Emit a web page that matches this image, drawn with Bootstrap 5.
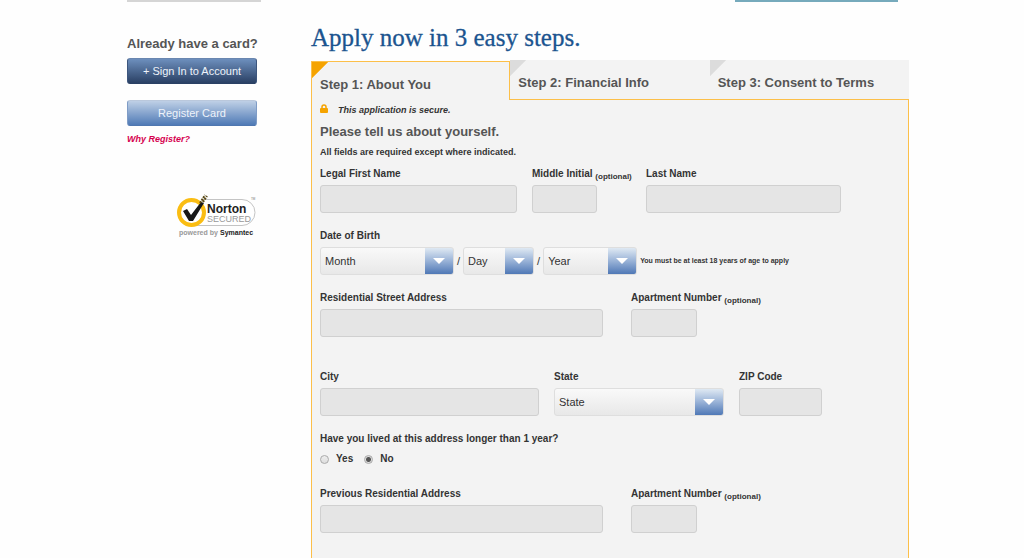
<!DOCTYPE html>
<html lang="en">
<head>
<meta charset="utf-8">
<meta name="viewport" content="width=device-width, initial-scale=1">
<title>Apply now</title>
<link href="https://cdn.jsdelivr.net/npm/bootstrap@5.3.0/dist/css/bootstrap.min.css" rel="stylesheet">
<style>
  body { background: #fefefe; color: #333; font-family: "Liberation Sans", Arial, sans-serif; font-size: 10px; line-height: 12px; }
  .page { max-width: 794px; padding: 0 0 0 12px; gap: 50px; }
  .side { width: 134px; padding-right: 4px; }
  .side-rule { height: 2px; background: #d5d5d5; margin-right: -4px; }
  .side h2 { font-size: 13px; line-height: 16px; color: #555; margin: 34px -4px 6px 0; white-space: nowrap; }
  .side .btn { font-size: 11px; line-height: 16px; padding: 4px; border: 1px solid; border-radius: 3px; color: #eef3fa; height: 26px; }
  .side .btn-signin { background: linear-gradient(#6d8fbd, #2a4064); border-color: #6a87b0 #3d567d #2a4064; }
  .side .btn-register { background: linear-gradient(#bfd0e6, #4f7ab6); border-color: #bac8dc #7f9cc6 #4f77b0; margin-top: 16px; }
  .why { color: #d6004f; font-size: 9px; margin-top: 7px; }
  .norton { margin: 48px 0 0 48px; }
  .top-rule { width: 163px; height: 2px; background: #76aabc; margin-right: 11px; }
  h1 { font-family: Georgia, "Liberation Serif", serif; font-size: 25px; line-height: 32px; color: #1b548f; margin: 20px 0 6px; -webkit-text-stroke: 0.3px; }
  .steps .nav-link { height: 40px; padding: 15px 8px 0; font-size: 13px; line-height: 16px; font-weight: 700; color: #555; background: linear-gradient(135deg, #dcdcdc 11px, transparent 12px) #f3f3f3; border: 0 solid #fcbf49; border-bottom-width: 1px; border-radius: 0; text-align: left; }
  .steps .nav-link.active { color: #555; background: linear-gradient(135deg, #f5a300 11px, transparent 12px) #f3f3f3; border-width: 1px 1px 0; margin-top: 1px; height: 39px; padding-right: 6px; }
  .panel { background: #f3f3f3; border: solid #fcbf49; border-width: 0 1px; padding: 4px 8px 26px; }
  .panel h2 { font-size: 13px; line-height: 16px; font-weight: 700; color: #555; margin: 8px 0 6px; }
  .secure { gap: 10px; font-size: 9px; }
  .required { font-size: 9px; }
  .fields { margin-top: 17px; gap: 15px; }
  .fields-first { margin-top: 10px; }
  .fields-wide { gap: 28px; }
  .fields-city { margin-top: 34px; }
  .fields-prev { margin-top: 23px; }
  .panel label, .panel legend { display: block; font-size: 10px; line-height: 12px; height: 12px; font-weight: 700; margin: 0 0 5px; white-space: nowrap; }
  .optional { font-size: 8px; line-height: 8px; position: relative; top: 2px; }
  .panel .form-control, .panel .form-select { height: 28px; padding: 0 4px; font-size: 11px; line-height: 16px; color: #333; border: 1px solid #d0d0d0; border-radius: 3px; max-width: 100%; }
  .panel .form-control { background: #e5e5e5; }
  .panel .form-select {
    border-color: #dedede;
    background: url("data:image/svg+xml,%3Csvg xmlns='http://www.w3.org/2000/svg' width='12' height='6'%3E%3Cpath d='M0 0h12L6 6z' fill='white'/%3E%3C/svg%3E") right 8px top 10px / 12px 6px no-repeat,
      linear-gradient(#dfe9f3, #a0b8da 45%, #4f78b6) right / 28px 100% no-repeat,
      linear-gradient(#f9f9f9, #e8e8e8);
  }
  .w-first { width: 197px; } .w-mid { width: 65px; } .w-last { width: 195px; }
  .field-mid { width: 99px; }
  .w-month { width: 134px; } .w-day { width: 71px; } .w-year { width: 94px; }
  .w-street { width: 283px; } .w-apt { width: 66px; }
  .w-city { width: 219px; } .w-state { width: 170px; } .w-zip { width: 83px; }
  .dob { gap: 3px; font-size: 11px; }
  .age { font-size: 7px; font-weight: 700; }
  .panel .choices { margin-top: 8px; height: 12px; }
  .panel .choices label { margin: 0 11px 0 7px; }
  .choices .form-check-input { width: 9px; height: 9px; margin: 0; float: none; border: 1px solid #aaa; background: linear-gradient(#eee, #ddd); }
  .choices .form-check-input:checked { background: radial-gradient(#555 2px, #ddd 3px); border-color: #aaa; }
</style>
</head>
<body>
<div class="container page d-flex align-items-stretch min-vh-100">
  <aside class="side flex-shrink-0">
    <div class="side-rule"></div>
    <h2 class="fw-bold">Already have a card?</h2>
    <button type="button" class="btn btn-signin w-100 d-block">+ Sign In to Account</button>
    <button type="button" class="btn btn-register w-100 d-block">Register Card</button>
    <a href="#" class="why d-block fw-bold fst-italic text-decoration-none">Why Register?</a>
    <svg class="norton d-block" width="84" height="46" viewBox="0 0 84 46" role="img" aria-label="Norton Secured, powered by Symantec" font-family="Liberation Sans, Arial, sans-serif">
      <path d="M26 6.500H67a13 13 0 0 1 0 26H22" fill="#fff" stroke="#c4c4c4"/>
      <circle cx="16.500" cy="19.500" r="12.500" fill="#fff" stroke="#fabd13" stroke-width="4"/>
      <path d="M8 18l4-2 4 6 10-13 3 1-11 18h-4z" fill="#181818"/>
      <path d="M25 10l5-8M28 9l4-6" fill="none" stroke="#5b4b18" stroke-width="2" stroke-dasharray="2 1"/>
      <text x="32" y="20" font-size="12" font-weight="700" fill="#222">Norton</text>
      <text x="32" y="29" font-size="9" fill="#999">SECURED</text>
      <text x="76" y="7" font-size="3" fill="#777">TM</text>
      <text x="4" y="42" font-size="7" fill="#999" font-weight="700">powered by</text>
      <text x="45" y="42" font-size="7" font-weight="700" fill="#222">Symantec</text>
    </svg>
  </aside>

  <main class="flex-grow-1 d-flex flex-column">
    <div class="top-rule ms-auto"></div>
    <h1 class="fw-normal">Apply now in 3 easy steps.</h1>
    <nav class="nav nav-justified steps">
      <a class="nav-link active" href="#" aria-current="step">Step 1: About You</a>
      <a class="nav-link" href="#">Step 2: Financial Info</a>
      <a class="nav-link" href="#">Step 3: Consent to Terms</a>
    </nav>
    <form class="panel flex-grow-1">
      <div class="secure d-flex fw-bold fst-italic">
        <svg width="8" height="10" viewBox="0 0 8 10" aria-hidden="true"><path d="M2 5V3a2 2 0 0 1 4 0v2" fill="none" stroke="#f5a300" stroke-width="1.500"/><rect y="4" width="8" height="5" rx="1" fill="#f5a300"/></svg>
        <span>This application is secure.</span>
      </div>
      <h2>Please tell us about yourself.</h2>
      <div class="fw-bold required">All fields are required except where indicated.</div>

      <div class="fields fields-first d-flex flex-wrap">
        <div><label for="first">Legal First Name</label><input id="first" type="text" class="form-control w-first"></div>
        <div class="field-mid"><label for="mid">Middle Initial <span class="optional">(optional)</span></label><input id="mid" type="text" class="form-control w-mid"></div>
        <div><label for="last">Last Name</label><input id="last" type="text" class="form-control w-last"></div>
      </div>

      <div class="fields">
        <label for="month">Date of Birth</label>
        <div class="dob d-flex flex-wrap align-items-center">
          <select id="month" class="form-select w-month"><option>Month</option></select>
          <span>/</span>
          <select aria-label="Day" class="form-select w-day"><option>Day</option></select>
          <span>/</span>
          <select aria-label="Year" class="form-select w-year"><option>Year</option></select>
          <span class="age">You must be at least 18 years of age to apply</span>
        </div>
      </div>

      <div class="fields fields-wide d-flex flex-wrap">
        <div><label for="street">Residential Street Address</label><input id="street" type="text" class="form-control w-street"></div>
        <div><label for="apt">Apartment Number <span class="optional">(optional)</span></label><input id="apt" type="text" class="form-control w-apt"></div>
      </div>

      <div class="fields fields-city d-flex flex-wrap">
        <div><label for="city">City</label><input id="city" type="text" class="form-control w-city"></div>
        <div><label for="state">State</label><select id="state" class="form-select w-state"><option>State</option></select></div>
        <div><label for="zip">ZIP Code</label><input id="zip" type="text" class="form-control w-zip"></div>
      </div>

      <fieldset class="fields">
        <legend class="mb-0 float-none">Have you lived at this address longer than 1 year?</legend>
        <div class="choices d-flex align-items-center">
          <input class="form-check-input" type="radio" name="lived" id="yes"><label for="yes">Yes</label>
          <input class="form-check-input" type="radio" name="lived" id="no" checked><label for="no">No</label>
        </div>
      </fieldset>

      <div class="fields fields-wide fields-prev d-flex flex-wrap">
        <div><label for="prev">Previous Residential Address</label><input id="prev" type="text" class="form-control w-street"></div>
        <div><label for="prevapt">Apartment Number <span class="optional">(optional)</span></label><input id="prevapt" type="text" class="form-control w-apt"></div>
      </div>
    </form>
  </main>
</div>
<script src="https://cdn.jsdelivr.net/npm/bootstrap@5.3.0/dist/js/bootstrap.bundle.min.js"></script>
</body>
</html>
